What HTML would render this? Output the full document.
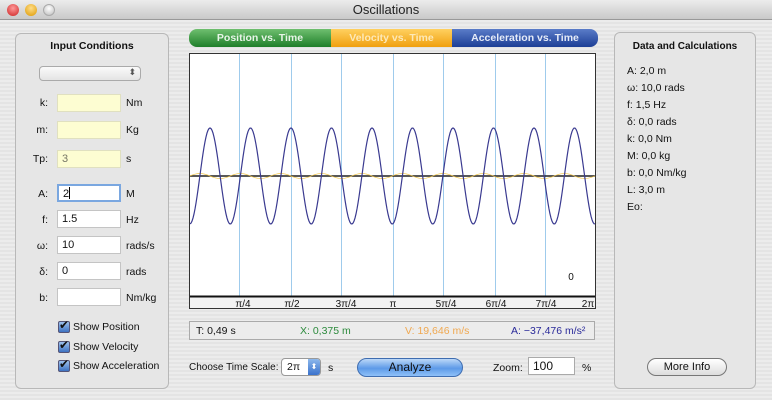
<!DOCTYPE html>
<html><head><meta charset="utf-8"><style>
*{box-sizing:border-box;margin:0;padding:0}
body{width:772px;height:400px;overflow:hidden;font-family:"Liberation Sans","DejaVu Sans",sans-serif;font-size:10.5px;color:#111;background:repeating-linear-gradient(#ececec 0 2px,#e4e4e4 2px 4px);position:relative}
.a{position:absolute}
.title{left:0;top:0;width:772px;height:20px;background:linear-gradient(#ececec,#c9c9c9);border-bottom:1px solid #999;text-align:center;font-size:13px;line-height:20px;color:#222}
.dot{width:12px;height:12px;border-radius:50%;top:4px}
.panel{background:#e6e6e6;border:1px solid #b8b8b8;border-radius:6px}
.fld{left:57px;width:64px;height:18px;border:1px solid #c4c4c4;background:#fff;padding-left:4px;line-height:16px;font-size:11px}
.y{background:#fdfdd2;border-color:#e0e0c0}
.lbl{width:40px;text-align:right;left:8px}
.unit{left:126px}
.cb{left:58px;width:12px;height:12px;border:1px solid #557;border-radius:2px;background:linear-gradient(#9fc2ee,#3d72c2)}
.cb:after{content:"✔";position:absolute;left:0px;top:-4px;font-size:12px;color:#111}
.cbl{left:73px}
.r{left:627px}
</style></head><body>
<div class="a title">Oscillations</div>
<div class="a dot" style="left:7px;background:radial-gradient(circle at 50% 35%,#f99,#c22)"></div>
<div class="a dot" style="left:25px;background:radial-gradient(circle at 50% 35%,#fd8,#d90)"></div>
<div class="a dot" style="left:43px;background:radial-gradient(circle at 50% 35%,#fff,#bbb);border:1px solid #aaa"></div>

<div class="a panel" style="left:15px;top:33px;width:154px;height:356px"></div>
<div class="a" style="left:15px;top:40px;width:154px;text-align:center;font-weight:bold">Input Conditions</div>
<div class="a" style="left:39px;top:66px;width:102px;height:15px;border:1px solid #aaa;border-radius:4px;background:linear-gradient(#fafafa,#e4e4e4)"><span class="a" style="right:4px;top:0px;font-size:9px;color:#555">⬍</span></div>

<div class="a lbl" style="top:97px">k:</div><div class="a fld y" style="top:94px"></div><div class="a unit" style="top:97px">Nm</div>
<div class="a lbl" style="top:124px">m:</div><div class="a fld y" style="top:121px"></div><div class="a unit" style="top:124px">Kg</div>
<div class="a lbl" style="top:153px">Tp:</div><div class="a fld y" style="top:150px;color:#776">3</div><div class="a unit" style="top:153px">s</div>
<div class="a lbl" style="top:188px">A:</div><div class="a fld" style="top:184px;border:2px solid #7aa7e0">2<span style="display:inline-block;width:1px;height:12px;background:#000;vertical-align:-2px"></span></div><div class="a unit" style="top:188px">M</div>
<div class="a lbl" style="top:214px">f:</div><div class="a fld" style="top:210px">1.5</div><div class="a unit" style="top:214px">Hz</div>
<div class="a lbl" style="top:240px">ω:</div><div class="a fld" style="top:236px">10</div><div class="a unit" style="top:240px">rads/s</div>
<div class="a lbl" style="top:266px">δ:</div><div class="a fld" style="top:262px">0</div><div class="a unit" style="top:266px">rads</div>
<div class="a lbl" style="top:292px">b:</div><div class="a fld" style="top:288px"></div><div class="a unit" style="top:292px">Nm/kg</div>
<div class="a cb" style="top:321px"></div><div class="a cbl" style="top:321px">Show Position</div>
<div class="a cb" style="top:341px"></div><div class="a cbl" style="top:341px">Show Velocity</div>
<div class="a cb" style="top:360px"></div><div class="a cbl" style="top:360px">Show Acceleration</div>

<div class="a" style="left:189px;top:29px;width:142px;height:18px;border-radius:8px 0 0 8px;background:linear-gradient(#6fbf6f,#1f7f2a);color:#e8f5e8;font-weight:bold;text-align:center;line-height:18px">Position vs. Time</div>
<div class="a" style="left:331px;top:29px;width:121px;height:18px;background:linear-gradient(#ffd060,#f0a010);color:#fde9b8;font-weight:bold;text-align:center;line-height:18px">Velocity vs. Time</div>
<div class="a" style="left:452px;top:29px;width:146px;height:18px;border-radius:0 8px 8px 0;background:linear-gradient(#5a7cc8,#1d3f96);color:#e6ecf8;font-weight:bold;text-align:center;line-height:18px">Acceleration vs. Time</div>

<svg class="a" style="left:189px;top:53px" width="408" height="256">
<rect x="0.5" y="0.5" width="406" height="255" fill="#fff" stroke="#333"/>
<g stroke="#9fcbec" stroke-width="1">
<line x1="50.5" y1="1" x2="50.5" y2="243"/><line x1="102.5" y1="1" x2="102.5" y2="243"/><line x1="152.5" y1="1" x2="152.5" y2="243"/><line x1="204.5" y1="1" x2="204.5" y2="243"/><line x1="254.5" y1="1" x2="254.5" y2="243"/><line x1="306.5" y1="1" x2="306.5" y2="243"/><line x1="356.5" y1="1" x2="356.5" y2="243"/></g>
<line x1="1" y1="123" x2="406" y2="123" stroke="#222" stroke-width="1.5"/>
<path id="v" fill="none" stroke="#f2c64a" stroke-width="0.7"/>
<path id="ac" fill="none" stroke="#3a3a90" stroke-width="1.2"/>
<rect x="1" y="243" width="405" height="12" fill="#f2f2f2"/>
<line x1="1" y1="243.5" x2="406" y2="243.5" stroke="#111" stroke-width="2"/>
<g font-size="10" fill="#111" text-anchor="middle" font-family="Liberation Sans,sans-serif">
<text x="54" y="254">π/4</text><text x="103" y="254">π/2</text><text x="157" y="254">3π/4</text><text x="204" y="254">π</text><text x="257" y="254">5π/4</text><text x="307" y="254">6π/4</text><text x="357" y="254">7π/4</text><text x="399" y="254">2π</text>
<text x="382" y="227">0</text></g>
</svg>
<script>
(function(){var a="",v="";for(var x=1;x<=406;x+=1){var t=2*Math.PI*(x+189-210)/40.5;a+=(x==1?"M":"L")+x+","+(123-48*Math.cos(t)).toFixed(2);v+=(x==1?"M":"L")+x+","+(123+2.5*Math.sin(t)).toFixed(2);}
document.getElementById("ac").setAttribute("d",a);document.getElementById("v").setAttribute("d",v);})();
</script>

<div class="a" style="left:189px;top:321px;width:406px;height:19px;border:1px solid #aaa;background:#ececec"></div>
<div class="a" style="left:196px;top:325px">T: 0,49 s</div>
<div class="a" style="left:300px;top:325px;color:#2c8a3c">X: 0,375 m</div>
<div class="a" style="left:405px;top:325px;color:#f0a850">V: 19,646 m/s</div>
<div class="a" style="left:511px;top:325px;color:#2a2a9a">A: −37,476 m/s²</div>

<div class="a" style="left:189px;top:362px;font-size:10px">Choose Time Scale:</div>
<div class="a" style="left:281px;top:358px;width:40px;height:18px;border:1px solid #999;border-radius:4px;background:#fff;padding-left:5px;line-height:16px">2π<span class="a" style="right:0;top:0;width:12px;height:16px;background:linear-gradient(#8db8ec,#3a72cc);border-radius:0 3px 3px 0;color:#fff;font-size:8px;text-align:center">⬍</span></div>
<div class="a" style="left:328px;top:362px">s</div>
<div class="a" style="left:357px;top:358px;width:106px;height:19px;border:1px solid #3f6db0;border-radius:10px;background:linear-gradient(#bcd8f8,#5d9ae8 55%,#8fc0f8);text-align:center;line-height:17px;font-size:12px">Analyze</div>
<div class="a" style="left:493px;top:362px">Zoom:</div>
<div class="a" style="left:528px;top:357px;width:47px;height:18px;border:1px solid #aaa;background:#fff;padding-left:4px;line-height:16px;font-size:12px">100</div>
<div class="a" style="left:582px;top:362px">%</div>

<div class="a panel" style="left:614px;top:32px;width:142px;height:357px"></div>
<div class="a" style="left:614px;top:41px;width:142px;text-align:center;font-weight:bold;font-size:10px">Data and Calculations</div>
<div class="a r" style="top:65px">A: 2,0 m</div>
<div class="a r" style="top:82px">ω: 10,0 rads</div>
<div class="a r" style="top:99px">f: 1,5 Hz</div>
<div class="a r" style="top:116px">δ: 0,0 rads</div>
<div class="a r" style="top:133px">k: 0,0 Nm</div>
<div class="a r" style="top:150px">M: 0,0 kg</div>
<div class="a r" style="top:167px">b: 0,0 Nm/kg</div>
<div class="a r" style="top:184px">L: 3,0 m</div>
<div class="a r" style="top:201px">Eo:</div>
<div class="a" style="left:647px;top:358px;width:80px;height:18px;border:1px solid #777;border-radius:9px;background:linear-gradient(#fff,#ddd);text-align:center;line-height:16px;font-size:11px">More Info</div>
</body></html>
